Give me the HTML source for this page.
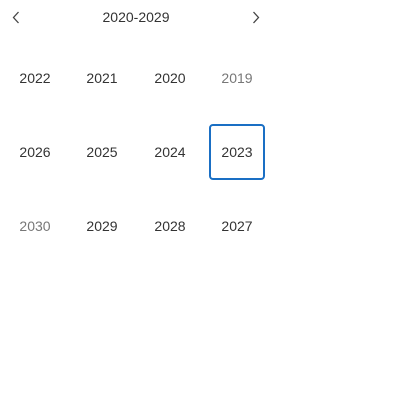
<!DOCTYPE html>
<html><head><style>
html,body{margin:0;padding:0;background:#fff;width:400px;height:400px;overflow:hidden;font-family:"Liberation Sans",sans-serif;color:#333}
.t{position:absolute;font-size:14px;line-height:16px;transform:translate(-50%,-50%);white-space:nowrap}
.g{color:#777}
.box{position:absolute;left:209px;top:124px;width:52px;height:52px;border:2px solid #1a6fc4;border-radius:4px}
svg{position:absolute}
</style></head><body>
<svg style="left:11px;top:11px" width="10" height="13" viewBox="0 0 10 13"><path d="M7.5 1 L2.5 6.5 L7.5 12" fill="none" stroke="#444" stroke-width="1.3"/></svg>
<svg style="left:251px;top:11px" width="10" height="13" viewBox="0 0 10 13"><path d="M2.5 1 L7.5 6.5 L2.5 12" fill="none" stroke="#444" stroke-width="1.3"/></svg>
<div class="t" style="left:136px;top:17px">2020-2029</div>
<div class="box"></div>
<div class="t" style="left:35px;top:78px">2022</div>
<div class="t" style="left:102px;top:78px">2021</div>
<div class="t" style="left:170px;top:78px">2020</div>
<div class="t g" style="left:237px;top:78px">2019</div>
<div class="t" style="left:35px;top:152px">2026</div>
<div class="t" style="left:102px;top:152px">2025</div>
<div class="t" style="left:170px;top:152px">2024</div>
<div class="t" style="left:237px;top:152px">2023</div>
<div class="t g" style="left:35px;top:226px">2030</div>
<div class="t" style="left:102px;top:226px">2029</div>
<div class="t" style="left:170px;top:226px">2028</div>
<div class="t" style="left:237px;top:226px">2027</div>
</body></html>
